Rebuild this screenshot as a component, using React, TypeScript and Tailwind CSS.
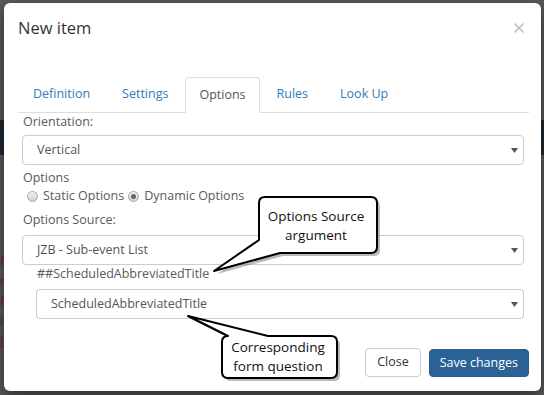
import React from "react";

const font = { fontFamily: '"Open Sans", "Liberation Sans", sans-serif' };

function Arrow() {
  return (
    <svg width="7" height="5" viewBox="0 0 7 5" className="shrink-0">
      <path d="M0 0 H7 L3.5 5 Z" fill="#555" />
    </svg>
  );
}

function Select({ value }: { value: string }) {
  return (
    <div className="h-[30px] border border-[#ccc] rounded-[4px] flex items-center justify-between pl-[14px] pr-[5px] text-[12.5px] text-[#555] bg-white">
      <span>{value}</span>
      <Arrow />
    </div>
  );
}

function Radio({ checked }: { checked?: boolean }) {
  return (
    <span className="w-[11px] h-[11px] rounded-full border border-[#a8a8a8] bg-gradient-to-b from-[#f2f2f2] to-[#d2d2d2] flex items-center justify-center shrink-0">
      {checked && <span className="w-[5px] h-[5px] rounded-full bg-[#666]" />}
    </span>
  );
}

export default function App() {
  const tabs = ["Definition", "Settings", "Options", "Rules", "Look Up"];
  return (
    <div className="relative w-[544px] h-[395px] overflow-hidden bg-[#5a5a5a]" style={font}>
      {/* background page (behind the backdrop) */}
      <div className="flex flex-col">
        <div className="h-[120px]" />
        <div className="h-[35px] bg-[#1f2a35]" />
        <div className="h-[100px]" />
        <div className="flex flex-col gap-[6px] text-[12px] leading-[14px] text-[#7a1f1f]">
          <span>following the</span>
          <span>rules of the</span>
          <span>form field</span>
          <span>in a sector</span>
          <span>[ENTER] - to be</span>
          <span className="pl-[20px]">to be customised to other name to 'do' as a non-standard point</span>
        </div>
      </div>

      {/* modal */}
      <div className="absolute left-[4px] top-[3px] w-[537px] h-[388px] rounded-[6px] bg-white shadow-[0_5px_15px_rgba(0,0,0,0.5)] flex flex-col">
        <div className="h-[50px] flex items-center justify-between pl-[14px] pr-[17px]">
          <span className="text-[16.5px] text-[#333]">New item</span>
          <svg width="10" height="10" viewBox="0 0 10 10">
            <path d="M0.5 0.5 L9.5 9.5 M9.5 0.5 L0.5 9.5" stroke="#c4c4c4" strokeWidth="1.6" />
          </svg>
        </div>

        <div className="mt-[24px] ml-[14px] mr-[12px] flex h-[36px] border-b border-[#ddd]">
          {tabs.map((t) =>
            t === "Options" ? (
              <div
                key={t}
                className="px-[13px] mr-[2px] flex items-center text-[12.5px] text-[#555] bg-white border border-[#ddd] border-b-white rounded-t-[4px] -mb-px"
              >
                {t}
              </div>
            ) : (
              <div key={t} className="px-[15px] mr-[2px] flex items-center text-[12.5px] text-[#337ab7]">
                {t}
              </div>
            )
          )}
        </div>

        <div className="pl-[18px] pr-[17px] flex flex-col text-[12.5px] leading-[18px] text-[#5a5a5a]">
          <span className="pl-[1px]">Orientation:</span>
          <div className="mt-[4px]">
            <Select value="Vertical" />
          </div>
          <span className="pl-[1px] mt-[4px]">Options</span>
          <div className="flex items-center pl-[5px]">
            <Radio />
            <span className="ml-[5px]">Static Options</span>
            <span className="ml-[4px]">
              <Radio checked />
            </span>
            <span className="ml-[5px]">Dynamic Options</span>
          </div>
          <span className="pl-[1px] mt-[6px]">Options Source:</span>
          <div className="mt-[6px]">
            <Select value="JZB - Sub-event List" />
          </div>
          <span className="pl-[15px]">##ScheduledAbbreviatedTitle</span>
          <div className="mt-[6px] ml-[14px]">
            <Select value="ScheduledAbbreviatedTitle" />
          </div>
        </div>

        <div className="mt-[29px] flex justify-end gap-[8px] pr-[12px]">
          <div className="h-[29px] px-[11px] flex items-center border border-[#ccc] rounded-[4px] text-[12.5px] text-[#333] bg-white">
            Close
          </div>
          <div className="h-[28px] mt-[1px] px-[10px] flex items-center rounded-[4px] text-[12.5px] text-white bg-[#2a6296] border border-[#285e8e]">
            Save changes
          </div>
        </div>
      </div>

      {/* annotation callouts */}
      <svg className="absolute left-0 top-0 pointer-events-none" width="544" height="395" viewBox="0 0 544 395">
        <g transform="translate(3 3)" opacity="0.45">
          <path
            d="M265 197 H371 Q377 197 377 203 V247 Q377 253 371 253 H280 L214 271 L259 240 V203 Q259 197 265 197 Z"
            fill="#666"
          />
          <path
            d="M228 336 L188 316 L268 336 H331 Q337 336 337 342 V372 Q337 378 331 378 H228 Q222 378 222 372 V342 Q222 336 228 336 Z"
            fill="#666"
          />
        </g>
        <path
          d="M265 197 H371 Q377 197 377 203 V247 Q377 253 371 253 H280 L214 271 L259 240 V203 Q259 197 265 197 Z"
          fill="white"
          stroke="black"
          strokeWidth="2"
          strokeLinejoin="round"
        />
        <path
          d="M228 336 L188 316 L268 336 H331 Q337 336 337 342 V372 Q337 378 331 378 H228 Q222 378 222 372 V342 Q222 336 228 336 Z"
          fill="white"
          stroke="black"
          strokeWidth="2"
          strokeLinejoin="round"
        />
        <g fontFamily='"Open Sans", "Liberation Sans", sans-serif' fontSize="13.5" fill="#111" textAnchor="middle">
          <text x="316" y="221">Options Source</text>
          <text x="316" y="240">argument</text>
          <text x="278" y="352">Corresponding</text>
          <text x="278" y="371">form question</text>
        </g>
      </svg>
    </div>
  );
}
